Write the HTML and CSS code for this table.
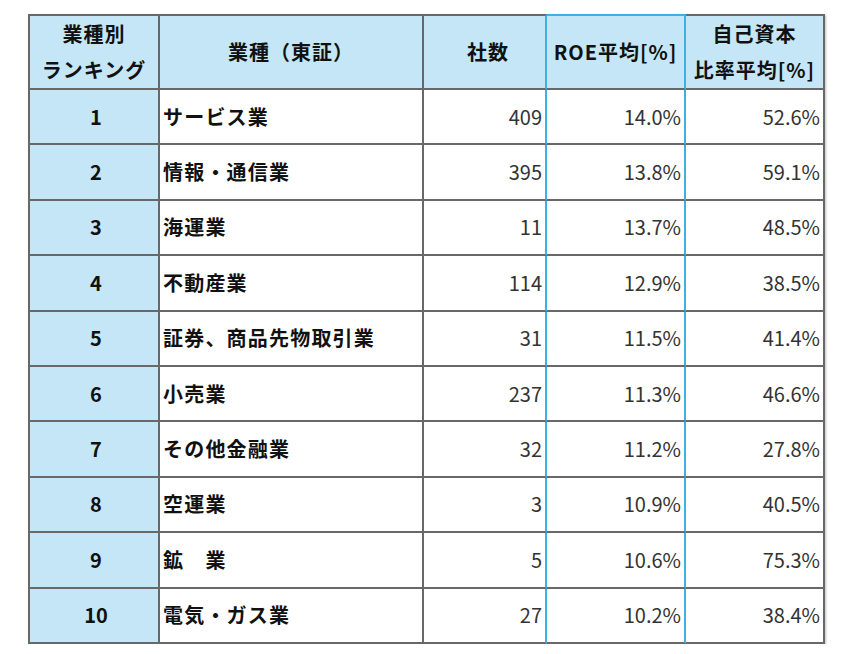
FILE: index.html
```html
<!DOCTYPE html>
<html lang="ja">
<head>
<meta charset="utf-8">
<link rel="stylesheet" href="styles.css">
</head>
<body>
<div class="wrap">
<table class="rank">
  <colgroup>
    <col class="c1"><col class="c2"><col class="c3"><col class="c4"><col class="c5">
  </colgroup>
  <thead>
    <tr>
      <th class="rk">業種別<br>ランキング</th>
      <th>業種（東証）</th>
      <th class="num-h">社数</th>
      <th class="roe">ROE平均[%]</th>
      <th>自己資本<br>比率平均[%]</th>
    </tr>
  </thead>
  <tbody>
    <tr><td class="rk">1</td><td class="name">サービス業</td><td class="num cnt">409</td><td class="num roe">14.0%</td><td class="num">52.6%</td></tr>
    <tr><td class="rk">2</td><td class="name">情報・通信業</td><td class="num cnt">395</td><td class="num roe">13.8%</td><td class="num">59.1%</td></tr>
    <tr><td class="rk">3</td><td class="name">海運業</td><td class="num cnt">11</td><td class="num roe">13.7%</td><td class="num">48.5%</td></tr>
    <tr><td class="rk">4</td><td class="name">不動産業</td><td class="num cnt">114</td><td class="num roe">12.9%</td><td class="num">38.5%</td></tr>
    <tr><td class="rk">5</td><td class="name">証券、商品先物取引業</td><td class="num cnt">31</td><td class="num roe">11.5%</td><td class="num">41.4%</td></tr>
    <tr><td class="rk">6</td><td class="name">小売業</td><td class="num cnt">237</td><td class="num roe">11.3%</td><td class="num">46.6%</td></tr>
    <tr><td class="rk">7</td><td class="name">その他金融業</td><td class="num cnt">32</td><td class="num roe">11.2%</td><td class="num">27.8%</td></tr>
    <tr><td class="rk">8</td><td class="name">空運業</td><td class="num cnt">3</td><td class="num roe">10.9%</td><td class="num">40.5%</td></tr>
    <tr><td class="rk">9</td><td class="name">鉱　業</td><td class="num cnt">5</td><td class="num roe">10.6%</td><td class="num">75.3%</td></tr>
    <tr><td class="rk">10</td><td class="name">電気・ガス業</td><td class="num cnt">27</td><td class="num roe">10.2%</td><td class="num">38.4%</td></tr>
  </tbody>
</table>
</div>
</body>
</html>
```
FILE: styles.css
```css
html, body {
  margin: 0;
  padding: 0;
  background: #ffffff;
}
body {
  font-family: "Noto Sans CJK JP", "Noto Sans", sans-serif;
  color: #111;
}
.wrap {
  padding: 14px 0 0 28px;
}
.rank {
  border-collapse: separate;
  border-spacing: 0;
  table-layout: fixed;
  width: 797px;
  box-shadow: 1px 1px 2px rgba(0,0,0,0.25);
}
.c1 { width: 132px; }
.c2 { width: 264px; }
.c3 { width: 123px; }
.c4 { width: 139px; }
.c5 { width: 139px; }

.rank th, .rank td {
  border-right: 2px solid #686868;
  border-bottom: 2px solid #686868;
  padding: 0 4px;
}
.rank th {
  border-top: 2px solid #686868;
}
.rank .rk {
  border-left: 2px solid #686868;
}
.rank thead tr { height: 73px; }
.rank tbody tr { height: 55.4px; }

.rank th {
  background: #c5e6f6;
  font-weight: 700;
  font-size: 20px;
  line-height: 36px;
  letter-spacing: 1px;
  text-align: center;
  color: #111;
}
.rank th.num-h {
  text-align: right;
  padding-right: 36px;
}
.rank td {
  font-size: 20px;
  line-height: 24px;
}
.rank td.rk {
  background: #c5e6f6;
  text-align: center;
  font-weight: 700;
  padding-left: 6px;
  padding-right: 2px;
}
.rank td.name {
  font-weight: 700;
  letter-spacing: 1.2px;
  text-align: left;
  padding-left: 3px;
}
.rank td.num {
  text-align: right;
  font-weight: 400;
  color: #333;
  padding-right: 3px;
}
.rank .roe,
.rank th.num-h,
.rank td.cnt {
  border-right-color: #3cb1e3;
}
.rank th.roe {
  border-top-color: #3cb1e3;
}
```
